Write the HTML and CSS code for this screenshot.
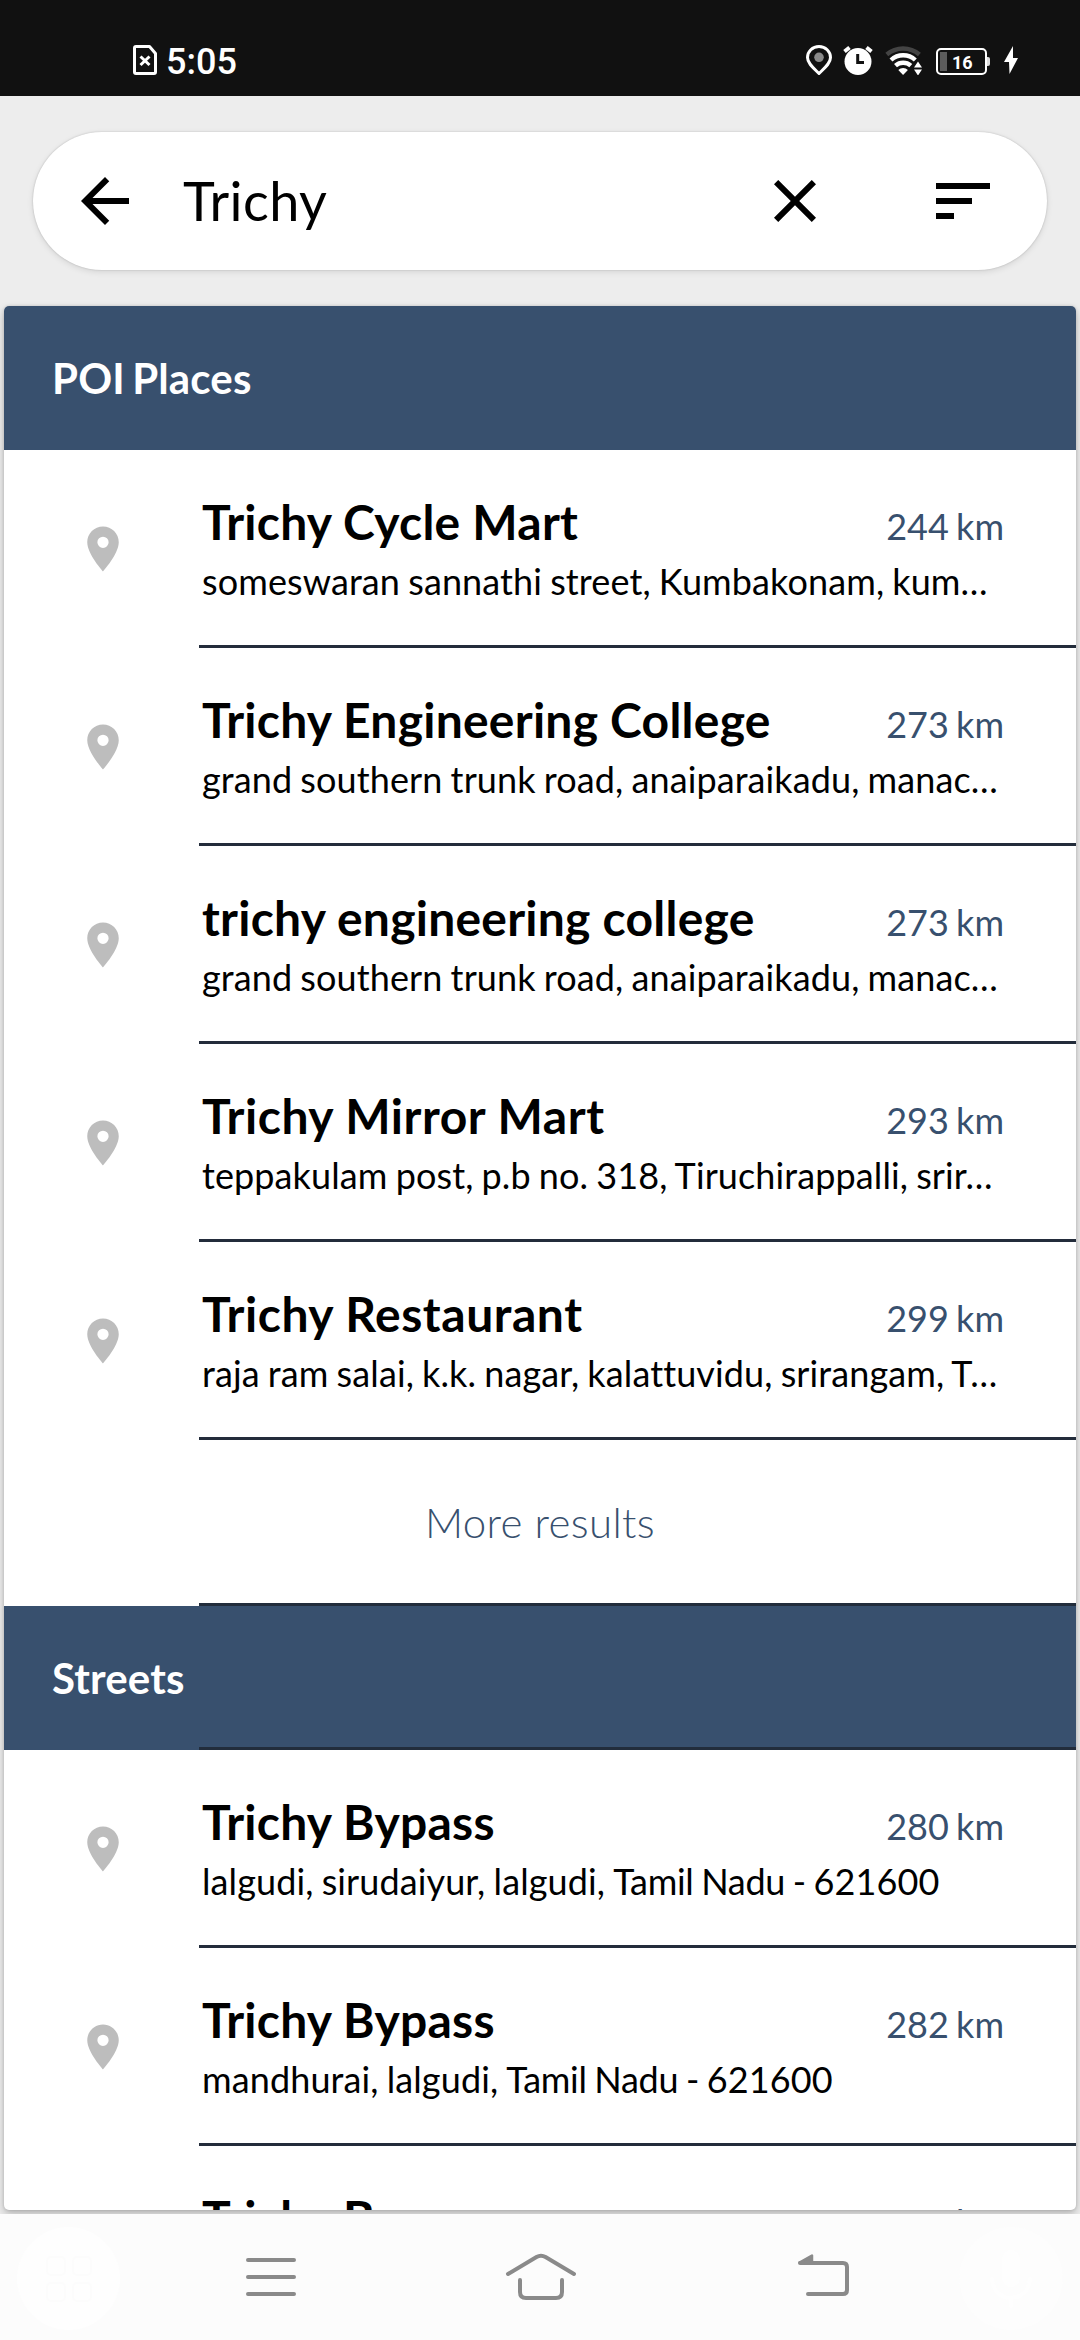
FILE: index.html
```html
<!DOCTYPE html>
<html lang="en">
<head>
<meta charset="utf-8">
<title>Trichy</title>
<link rel="stylesheet" href="styles.css">
</head>
<body>
<svg class="defs" width="0" height="0">
  <symbol id="pin" viewBox="0 0 24 24"><path d="M12 2C8.13 2 5 5.13 5 9c0 5.25 7 13 7 13s7-7.75 7-13c0-3.87-3.13-7-7-7zm0 9.5a2.5 2.5 0 0 1 0-5 2.5 2.5 0 0 1 0 5z"/></symbol>
</svg>
<div class="screen">
  <header class="status">
    <div class="status-left">
      <svg width="24" height="30" viewBox="0 0 24 30" fill="none" stroke="#fff" stroke-width="3"><path d="M3 1.5h13.5l6 7V27q0 1.500-1.500 1.500H3q-1.500 0-1.500-1.500V3q0-1.500 1.500-1.500z" stroke-linejoin="round"/><path d="M7.500 11.500l9 8.500M16.500 11.500l-9 8.500"/></svg>
      <span class="time">5:05</span>
    </div>
    <div class="status-right">
      <svg class="s-loc" width="26" height="30" viewBox="0 0 26 30"><path d="M13 1.500C6.500 1.500 1.500 6.500 1.500 12.500c0 6 6.500 11 11.500 16 5-5 11.500-10 11.500-16 0-6-5-11-11.500-11z" fill="none" stroke="#fff" stroke-width="3"/><circle cx="13" cy="12.300" r="4.800" fill="#8a8a8a"/></svg>
      <svg class="s-alarm" width="30" height="30" viewBox="0 0 30 30"><circle cx="15" cy="16.500" r="13.500" fill="#fff"/><path d="M1.500 6.500l5-4M28.500 6.500l-5-4" stroke="#fff" stroke-width="4"/><path d="M14.700 9v8.500H21" fill="none" stroke="#111" stroke-width="3"/></svg>
      <svg class="s-wifi" width="37" height="30" viewBox="0 0 37 30" fill="none" stroke-width="4.400"><path d="M1.800 9.500a25 25 0 0 1 32.600 0" stroke="#444"/><path d="M6 15a18 18 0 0 1 24.300 0" stroke="#fff"/><path d="M10.500 20.600a11.500 11.500 0 0 1 15.300 0" stroke="#fff"/><path d="M13.300 25a7 7 0 0 1 9.600 0l-4.800 5z" fill="#fff"/><path d="M29 22.500l4-6 4 6zM29 24.500l4 6 4-6z" fill="#fff"/></svg>
      <span class="battery"><i></i><b>16</b></span>
      <svg class="s-bolt" width="14" height="28" viewBox="0 0 14 28"><path d="M9 0L0 16h5L5.500 28 14 12H9z" fill="#fff"/></svg>
    </div>
  </header>

  <main class="app">
    <div class="search">
      <svg width="72" height="72" viewBox="0 0 24 24"><path d="M20 11H7.830l5.590-5.590L12 4l-8 8 8 8 1.410-1.410L7.830 13H20v-2z"/></svg>
      <span class="query">Trichy</span>
      <svg class="clear" width="72" height="72" viewBox="0 0 24 24"><path d="M19 6.410L17.590 5 12 10.590 6.410 5 5 6.410 10.590 12 5 17.590 6.410 19 12 13.410 17.590 19 19 17.590 13.410 12z"/></svg>
      <svg width="72" height="72" viewBox="0 0 24 24"><path d="M3 18h6v-2H3v2zM3 6v2h18V6H3zm0 7h12v-2H3v2z"/></svg>
    </div>

    <section class="card">
      <h2 class="group">POI Places</h2>
      <article class="row"><svg class="pin"><use href="#pin"/></svg><div class="info"><div class="top"><h3>Trichy Cycle Mart</h3><span>244 km</span></div><p>someswaran sannathi street, Kumbakonam, kum…</p></div></article>
      <article class="row"><svg class="pin"><use href="#pin"/></svg><div class="info"><div class="top"><h3>Trichy Engineering College</h3><span>273 km</span></div><p>grand southern trunk road, anaiparaikadu, manac…</p></div></article>
      <article class="row"><svg class="pin"><use href="#pin"/></svg><div class="info"><div class="top"><h3>trichy engineering college</h3><span>273 km</span></div><p>grand southern trunk road, anaiparaikadu, manac…</p></div></article>
      <article class="row"><svg class="pin"><use href="#pin"/></svg><div class="info"><div class="top"><h3 class="wide">Trichy Mirror Mart</h3><span>293 km</span></div><p>teppakulam post, p.b no. 318, Tiruchirappalli, srir…</p></div></article>
      <article class="row"><svg class="pin"><use href="#pin"/></svg><div class="info"><div class="top"><h3 class="wide">Trichy Restaurant</h3><span>299 km</span></div><p>raja ram salai, k.k. nagar, kalattuvidu, srirangam, T…</p></div></article>
      <div class="more">More results</div>
      <h2 class="group ruled">Streets</h2>
      <article class="row"><svg class="pin"><use href="#pin"/></svg><div class="info"><div class="top"><h3>Trichy Bypass</h3><span>280 km</span></div><p>lalgudi, sirudaiyur, lalgudi, <span class="state">Tamil Nadu - </span>621600</p></div></article>
      <article class="row"><svg class="pin"><use href="#pin"/></svg><div class="info"><div class="top"><h3>Trichy Bypass</h3><span>282 km</span></div><p>mandhurai, lalgudi, <span class="state">Tamil Nadu - </span>621600</p></div></article>
      <article class="row"><svg class="pin"><use href="#pin"/></svg><div class="info"><div class="top"><h3>Trichy Bypass</h3><span>282 km</span></div></div></article>
    </section>
  </main>

  <nav class="nav">
    <svg width="1080" height="126" viewBox="0 0 1080 126" fill="none" stroke="#8a8a8a" stroke-width="4" stroke-linecap="round" stroke-linejoin="round">
      <circle cx="68.500" cy="64.500" r="51.500" fill="#fefefe" stroke="none"/>
      <g stroke="#fcfcfc" stroke-width="2"><rect x="47" y="43" width="18" height="18" rx="4"/><rect x="73" y="43" width="18" height="18" rx="4"/><rect x="47" y="69" width="18" height="18" rx="4"/><rect x="73" y="69" width="18" height="18" rx="4"/></g>
      <path d="M248 46h46M248 63h46M248 80h46"/>
      <path d="M508 60l28.500-17q4.500-2.700 9 0L574 60M520 66v12q0 6 6 6h30q6 0 6-6V66"/>
      <path d="M800 49h43q4 0 4 4v23q0 4-4 4h-35"/><path d="M799.500 48.500l12.500-7v7z" stroke-width="2.500" fill="#8a8a8a"/>
      <circle cx="1011" cy="64.500" r="51.500" fill="#fdfdfd" stroke="none"/>
      <path d="M992 65a19 19 0 0 0 38 0M1011 84v8" stroke="#fefefe"/><rect x="1002" y="36" width="18" height="37" rx="9" fill="#fefefe" stroke="none"/>
    </svg>
  </nav>
</div>
</body>
</html>
```
FILE: styles.css
```css
* { box-sizing: border-box; }
body, h2, h3, p { margin: 0; }
body { font-family: Lato, sans-serif; font-variant-ligatures: none; color: #000; background: #ededed; }
svg { display: block; flex: none; }
.defs { position: absolute; }
.screen { width: 1080px; height: 2340px; display: flex; flex-direction: column; overflow: hidden; }

.status {
  height: 96px; flex: none; background: #111; color: #fff;
  display: flex; justify-content: space-between; align-items: flex-start;
  padding: 45px 62px 0 133px; font-family: Roboto, sans-serif;
}
.status-left, .status-right { display: flex; align-items: flex-start; }
.time { font-size: 36px; font-weight: 500; line-height: 30px; margin: 2px 0 0 9px; }
.s-alarm { margin-left: 11px; }
.s-wifi { margin-left: 12px; }
.battery {
  position: relative; width: 51px; height: 27px; margin: 3px 0 0 14px;
  border: 2px solid #fff; border-radius: 5px; flex: none;
}
.battery::after { content: ""; position: absolute; left: 49px; top: 7px; width: 3px; height: 9px; background: #ddd; border-radius: 0 2px 2px 0; }
.battery i { position: absolute; left: 2px; top: 2px; width: 7px; height: 19px; background: #5c5c5c; }
.battery b { position: absolute; left: 14px; top: 1px; font-size: 18px; font-weight: 700; line-height: 23px; }
.s-bolt { margin: 1px 0 0 17px; }

.app { height: 2118px; flex: none; padding: 36px 4px 4px; display: flex; flex-direction: column; background: #ededed; overflow: hidden; }
.search {
  height: 138px; margin: 0 29px 36px; flex: none; padding: 0 48px 0 36px;
  border-radius: 69px; background: #fff; display: flex; align-items: center;
  box-shadow: 0 0 2px rgba(0, 0, 0, .2), 0 2px 6px rgba(0, 0, 0, .1);
}
.query { flex: 1; margin-left: 42px; font-size: 54px; line-height: 66px; letter-spacing: .45px; }
.clear { margin-right: 96px; }

.card {
  flex: 1; min-height: 0; background: #fff; border-radius: 5px; overflow: hidden;
  box-shadow: 0 0 3px rgba(0, 0, 0, .14), 0 4px 9px rgba(0, 0, 0, .24);
}
.group {
  height: 144px; background: #38506e; color: #fff; padding: 47px 0 0 48px;
  font-size: 42px; line-height: 50px; font-weight: 700; letter-spacing: .15px; word-spacing: -3px;
}
.row { height: 198px; display: flex; align-items: center; padding-left: 72px; }
.pin { width: 54px; height: 54px; fill: #bdbdbd; }
.info { height: 198px; flex: 1; margin-left: 69px; padding: 43px 72px 0 3px; border-bottom: 3px solid #232c3b; }
.top { display: flex; justify-content: space-between; align-items: baseline; }
h3 { font-size: 48px; line-height: 58px; font-weight: 700; letter-spacing: .24px; white-space: nowrap; }
h3.wide { letter-spacing: .55px; }
.top span { font-size: 36px; line-height: 44px; color: #38506e; word-spacing: -2px; white-space: nowrap; }
.info p { margin-top: 8px; font-size: 36px; line-height: 44px; letter-spacing: .11px; word-spacing: -1.2px; white-space: nowrap; }
.state { letter-spacing: -.3px; }
.more {
  height: 166px; padding-top: 57px; text-align: center; color: #38506e;
  font-size: 42px; line-height: 50px; font-weight: 300; letter-spacing: .35px;
}
.more, .ruled { background-image: linear-gradient(#222d3c, #222d3c); background-repeat: no-repeat; background-size: 877px 3px; background-position: right bottom; }

.nav { height: 126px; flex: none; background: #fcfcfc; }
```
